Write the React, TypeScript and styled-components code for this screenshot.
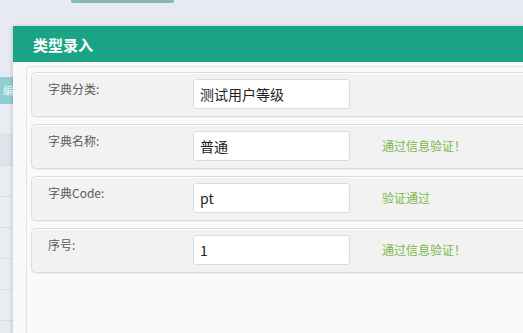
import { createGlobalStyle, styled } from "styled-components";

type TField = {
  label: string;
  value: string;
  tip?: string;
};

const fields: TField[] = [
  { label: "字典分类:", value: "测试用户等级" },
  { label: "字典名称:", value: "普通", tip: "通过信息验证！" },
  { label: "字典Code:", value: "pt", tip: "验证通过" },
  { label: "序号:", value: "1", tip: "通过信息验证！" },
];

const GlobalStyle = createGlobalStyle`
  html, body {
    margin: 0;
    padding: 0;
    background: #e7eaf1;
    overflow: hidden;
  }
  * { box-sizing: border-box; }
`;

const Page = styled.div`
  position: relative;
  width: 523px;
  height: 333px;
  overflow: hidden;
  font-family: "Microsoft YaHei", "Noto Sans CJK SC", sans-serif;
`;

const TopTabs = styled.div`
  display: flex;
  padding-left: 71px;
`;

const Tab = styled.div`
  width: 103px;
  height: 3px;
  background: #86b9b1;
  border-radius: 0 0 2px 2px;
`;

const BackTable = styled.div`
  display: flex;
  flex-direction: column;
  margin-top: 74px;
  width: 40px;
`;

const BackHead = styled.div`
  height: 27px;
  background: #8fcfd4;
  color: #eef8f8;
  font-size: 11px;
  line-height: 27px;
  padding-left: 3px;
`;

const BackRow = styled.div<{ $shade?: boolean }>`
  height: 31px;
  border-bottom: 1px solid #d9dde6;
  background: ${({ $shade }) => ($shade ? "#dfe3ec" : "#e9ecf2")};
`;

const Dialog = styled.div`
  position: absolute;
  left: 13px;
  top: 26px;
  width: 540px;
  height: 320px;
  background: #f9f9f9;
  box-shadow: -1px 0 4px rgba(0, 0, 0, 0.15);
  display: flex;
  flex-direction: column;
`;

const Header = styled.div`
  height: 36px;
  background: #1ba385;
  border-top: 1px solid #17a07f;
  color: #fff;
  font-size: 15px;
  font-weight: bold;
  line-height: 35px;
  padding-left: 20px;
`;

const Body = styled.div`
  flex: 1;
  padding: 4px 0 0 13px;
`;

const Panel = styled.div`
  height: 100%;
  border: 1px solid #e4e4e4;
  border-right: none;
  border-radius: 5px 0 0 0;
  background: #fafafa;
  padding: 5px 0 0 4px;
  display: flex;
  flex-direction: column;
  gap: 7px;
`;

const Row = styled.div`
  height: 45px;
  display: flex;
  align-items: flex-start;
  padding: 6px 0 0 16px;
  background: #f2f2f2;
  border: 1px solid #dcdcdc;
  border-right: none;
  border-radius: 5px 0 0 5px;
  box-shadow: inset 0 1px 0 #fff, 0 1px 1px rgba(0, 0, 0, 0.04);
`;

const Label = styled.div`
  width: 145px;
  padding-top: 2px;
  font-size: 12px;
  line-height: 16px;
  color: #5a5a5a;
`;

const Input = styled.input`
  width: 157px;
  height: 30px;
  border: 1px solid #dcdcdc;
  border-radius: 3px;
  background: #fff;
  padding: 0 6px;
  font-family: "Microsoft YaHei", "Noto Sans CJK SC", sans-serif;
  font-size: 14px;
  color: #222;
  outline: none;
`;

const Tip = styled.div`
  margin-left: 32px;
  line-height: 30px;
  font-size: 12px;
  color: #7ab84c;
`;

export default function App() {
  return (
    <Page>
      <GlobalStyle />
      <TopTabs>
        <Tab />
      </TopTabs>
      <BackTable>
        <BackHead>编</BackHead>
        <BackRow />
        <BackRow $shade />
        <BackRow />
        <BackRow />
        <BackRow />
        <BackRow />
        <BackRow />
      </BackTable>
      <Dialog>
        <Header>类型录入</Header>
        <Body>
          <Panel>
            {fields.map((f) => (
              <Row key={f.label}>
                <Label>{f.label}</Label>
                <Input defaultValue={f.value} readOnly />
                {f.tip && <Tip>{f.tip}</Tip>}
              </Row>
            ))}
          </Panel>
        </Body>
      </Dialog>
    </Page>
  );
}
